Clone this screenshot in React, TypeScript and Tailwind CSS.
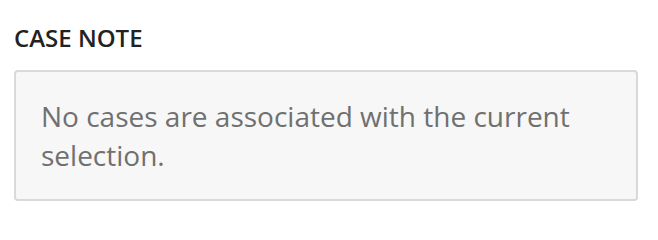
import React from 'react';

const App: React.FC = () => {
  return (
    <div className="min-h-screen bg-white px-[14px] pt-[22px]" style={{ fontFamily: '"Open Sans", sans-serif' }}>
      <h2 className="text-[24px] font-semibold leading-[32px] text-[#222222]">CASE NOTE</h2>
      <div className="mt-[16px] h-[131px] w-[624px] rounded-[4px] border-2 border-[#d9d9d9] bg-[#f7f7f7] px-[25px] pt-[25px]">
        <p className="text-[28px] leading-[39px] text-[#707070]">
          No cases are associated with the current selection.
        </p>
      </div>
    </div>
  );
};

export default App;
